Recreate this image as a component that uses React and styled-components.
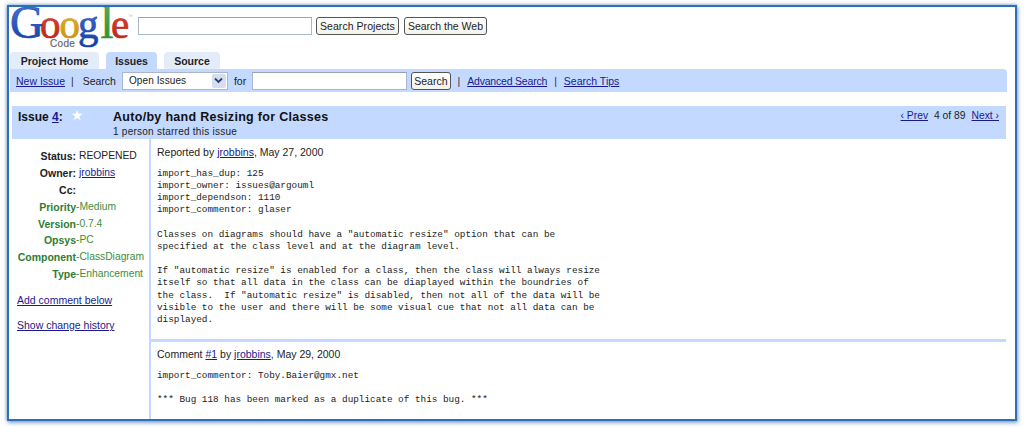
import React from 'react';
import styled, { createGlobalStyle } from 'styled-components';

const Global = createGlobalStyle`
  html, body { margin: 0; padding: 0; background: #fff; }
  body { width: 1024px; height: 427px; overflow: hidden; font-family: "Liberation Sans", Arial, sans-serif; color: #222; }
`;

const Frame = styled.div`
  box-sizing: border-box;
  width: 1010px;
  height: 416px;
  margin: 5px 0 0 7px;
  border: 2px solid #2c70b5;
  box-shadow: 1px 2px 4px rgba(70, 120, 180, 0.6), -1px 0 3px rgba(70, 120, 180, 0.35), 0 -1px 3px rgba(70, 120, 180, 0.3);
  background: #fff;
  overflow: hidden;
`;

const Masthead = styled.div`
  display: flex;
  align-items: flex-start;
  height: 45px;
  padding-left: 1px;
`;

const LogoSvg = styled.svg`
  display: block;
  width: 128px;
  height: 45px;
  flex: none;
  font-family: "Liberation Serif", serif;
  font-size: 47px;
`;

const SearchForm = styled.div`
  display: flex;
  align-items: center;
  gap: 4px;
  padding-top: 10px;
`;

const TextBox = styled.div`
  box-sizing: border-box;
  width: ${p => p.$w}px;
  height: 18px;
  margin: ${p => p.$margin || 0};
  background: #fff;
  border: 1px solid #a9b7c9;
  border-top-color: #9aa3ad;
`;

const Btn = styled.button`
  box-sizing: border-box;
  height: 18px;
  padding: 0 ${p => p.$pad || 3}px;
  margin-left: ${p => p.$ml || 0}px;
  background: linear-gradient(#fff, #f3f2ea);
  border: 1px solid #555;
  border-radius: 3px;
  font: 10.5px "Liberation Sans", sans-serif;
  letter-spacing: ${p => p.$ls || 0}px;
  color: #222;
  white-space: nowrap;
`;

const Tabs = styled.div`
  display: flex;
  gap: 7px;
  height: 17px;
  padding-left: 1px;
`;

const Tab = styled.div`
  box-sizing: border-box;
  width: ${p => p.$w}px;
  background: ${p => (p.$active ? '#c3d9ff' : '#e5ecf9')};
  border-radius: 4px 4px 0 0;
  font-size: 10.5px;
  font-weight: bold;
  line-height: 18px;
  text-align: center;
  color: #222;
`;

const SubBar = styled.div`
  display: flex;
  align-items: center;
  box-sizing: border-box;
  width: 997px;
  height: 23px;
  margin-left: 1px;
  padding-left: 6px;
  background: #c3d9ff;
  border-radius: 0 4px 0 0;
  font-size: 10.5px;
  white-space: nowrap;
`;

const A = styled.a`
  color: #1a1a8c;
  text-decoration: underline;
  letter-spacing: ${p => p.$ls || 0}px;
  cursor: pointer;
`;

const Sep = styled.span`
  margin: 0 ${p => p.$m || 6}px;
  color: #333;
`;

const SelectBox = styled.div`
  box-sizing: border-box;
  display: flex;
  align-items: center;
  justify-content: space-between;
  width: 106px;
  height: 18px;
  margin: 0 6px;
  padding: 0 1px 0 6px;
  background: #fff;
  border: 1px solid #a9b7c9;
  font-size: 10px;
  letter-spacing: 0.1px;
`;

const SelectArrow = styled.span`
  display: flex;
  align-items: center;
  justify-content: center;
  width: 14px;
  height: 14px;
  background: #d5deef;
  border-radius: 2px;
`;

const IssueHead = styled.div`
  display: flex;
  box-sizing: border-box;
  width: 994px;
  height: 33px;
  margin: 14px 0 0 3px;
  background: #c3d9ff;
`;

const IssueId = styled.div`
  display: flex;
  align-items: flex-start;
  width: 101px;
  padding: 4px 0 0 6px;
  box-sizing: border-box;
  font-size: 12px;
  font-weight: bold;
  line-height: 15px;
  white-space: pre;
  color: #111;
`;

const Star = styled.span`
  margin-left: 8px;
  margin-top: -2px;
  font-size: 14px;
  font-family: "DejaVu Sans", sans-serif;
  font-weight: normal;
  color: #fff;
`;

const TitleCol = styled.div`
  flex: 1;
  padding-top: 4px;
`;

const Title = styled.div`
  font-size: 12.5px;
  font-weight: bold;
  line-height: 15px;
  letter-spacing: 0.3px;
  color: #111;
`;

const Stars = styled.div`
  font-size: 10px;
  line-height: 13px;
  letter-spacing: 0.25px;
  color: #222;
`;

const Pager = styled.div`
  display: flex;
  gap: 6px;
  padding: 3px 7px 0 0;
  font-size: 10.3px;
  line-height: 13px;
  white-space: nowrap;
`;

const Body = styled.div`
  display: flex;
  height: 280px;
  margin-left: 3px;
  width: 994px;
`;

const Side = styled.div`
  box-sizing: border-box;
  width: 139px;
  padding: 9px 0 0 5px;
  border-right: 2px solid #c3d9ff;
  flex: none;
`;

const Meta = styled.div`
  display: grid;
  grid-template-columns: 59px auto;
  grid-auto-rows: 16.9px;
  font-size: 10.3px;
  line-height: 16px;
  white-space: nowrap;
`;

const Key = styled.span`
  text-align: right;
  font-size: 10.5px;
  font-weight: bold;
  color: ${p => (p.$green ? '#2e7d32' : '#222')};
`;

const Val = styled.span`
  color: ${p => (p.$green ? '#3a8f3e' : '#222')};
  padding-left: ${p => (p.$green ? 0 : 3)}px;
`;

const SideLink = styled.div`
  margin-top: ${p => p.$mt}px;
  font-size: 10.5px;
  line-height: 13px;
`;

const Main = styled.div`
  flex: 1;
`;

const Post = styled.div`
  box-sizing: border-box;
  height: ${p => p.$h}px;
  padding: ${p => p.$pt}px 0 0 6px;
  border-bottom: ${p => (p.$line ? '3px solid #c3d9ff' : 'none')};
`;

const Byline = styled.div`
  font-size: 10.5px;
  line-height: 13px;
  color: #222;
`;

const Pre = styled.pre`
  margin: ${p => p.$mt}px 0 0;
  font-family: "Liberation Mono", "Courier New", monospace;
  font-size: 9.35px;
  line-height: 12.15px;
  color: #222;
`;

const reported = `import_has_dup: 125
import_owner: issues@argouml
import_dependson: 1110
import_commentor: glaser

Classes on diagrams should have a "automatic resize" option that can be
specified at the class level and at the diagram level.

If "automatic resize" is enabled for a class, then the class will always resize
itself so that all data in the class can be diaplayed within the boundries of
the class.  If "automatic resize" is disabled, then not all of the data will be
visible to the user and there will be some visual cue that not all data can be
displayed.`;

const comment = `import_commentor: Toby.Baier@gmx.net

*** Bug 118 has been marked as a duplicate of this bug. ***`;

const labels = [
  ['Priority', 'Medium'],
  ['Version', '0.7.4'],
  ['Opsys', 'PC'],
  ['Component', 'ClassDiagram'],
  ['Type', 'Enhancement'],
];

const Logo = () => (
  <LogoSvg viewBox="0 0 128 45">
    <defs>
      <linearGradient id="lgBlue" x1="0" y1="0" x2="0" y2="1">
        <stop offset="0" stopColor="#4a7fe0" />
        <stop offset="1" stopColor="#123a9c" />
      </linearGradient>
      <linearGradient id="lgRed" x1="0" y1="0" x2="0" y2="1">
        <stop offset="0" stopColor="#e8543a" />
        <stop offset="1" stopColor="#b01c10" />
      </linearGradient>
      <linearGradient id="lgYellow" x1="0" y1="0" x2="0" y2="1">
        <stop offset="0" stopColor="#f0c330" />
        <stop offset="1" stopColor="#c08a0c" />
      </linearGradient>
      <linearGradient id="lgGreen" x1="0" y1="0" x2="0" y2="1">
        <stop offset="0" stopColor="#55b855" />
        <stop offset="1" stopColor="#2a8a30" />
      </linearGradient>
    </defs>
    <text x="0" y="31" fill="url(#lgBlue)" stroke="#1f4fb5" strokeWidth="0.7">G</text>
    <text x="30" y="31" fontSize="41" fill="url(#lgRed)" stroke="#c52a1a" strokeWidth="0.7">o</text>
    <text x="49.5" y="31" fontSize="41" fill="url(#lgYellow)" stroke="#cc9a10" strokeWidth="0.7">o</text>
    <text x="68" y="31" fontSize="41" fill="url(#lgBlue)" stroke="#1f4fb5" strokeWidth="0.7">g</text>
    <text x="90.5" y="31" fill="url(#lgGreen)" stroke="#2f8f35" strokeWidth="0.7">l</text>
    <text x="101" y="31" fontSize="41" fill="url(#lgRed)" stroke="#c52a1a" strokeWidth="0.7">e</text>
    <text x="118" y="11" fontSize="5" fontFamily="Liberation Sans, sans-serif" fill="#bbb">™</text>
    <text x="40" y="40" fontSize="10" fontFamily="Liberation Sans, sans-serif" letterSpacing="0.3" fill="#666" stroke="#666" strokeWidth="0.2">Code</text>
  </LogoSvg>
);

export default function App() {
  return (
    <>
      <Global />
      <Frame>
        <Masthead>
          <Logo />
          <SearchForm>
            <TextBox $w={174} />
            <Btn $ls={0.05}>Search Projects</Btn>
            <Btn $ml={1}>Search the Web</Btn>
          </SearchForm>
        </Masthead>
        <Tabs>
          <Tab $w={89}>Project Home</Tab>
          <Tab $w={51} $active>Issues</Tab>
          <Tab $w={56}>Source</Tab>
        </Tabs>
        <SubBar>
          <A>New Issue</A>
          <Sep>|</Sep>
          <span>&nbsp;Search</span>
          <SelectBox>
            Open Issues
            <SelectArrow>
              <svg width="9" height="7" viewBox="0 0 9 7">
                <path d="M1 1.5 L4.5 5 L8 1.5" fill="none" stroke="#2d3f73" strokeWidth="1.8" />
              </svg>
            </SelectArrow>
          </SelectBox>
          <span>for</span>
          <TextBox $w={155} $margin="0 4px 0 6px" />
          <Btn $pad={2}>Search</Btn>
          <Sep $m={7}>|</Sep>
          <A $ls={-0.2}>Advanced Search</A>
          <Sep $m={7}>|</Sep>
          <A>Search Tips</A>
        </SubBar>
        <IssueHead>
          <IssueId>
            Issue <A>4</A>:<Star>★</Star>
          </IssueId>
          <TitleCol>
            <Title>Auto/by hand Resizing for Classes</Title>
            <Stars>1 person starred this issue</Stars>
          </TitleCol>
          <Pager>
            <A>‹ Prev</A>
            <span>4 of 89</span>
            <A>Next ›</A>
          </Pager>
        </IssueHead>
        <Body>
          <Side>
            <Meta>
              <Key>Status:</Key>
              <Val>REOPENED</Val>
              <Key>Owner:</Key>
              <Val><A>jrobbins</A></Val>
              <Key>Cc:</Key>
              <Val />
              {labels.map(([k, v]) => (
                <React.Fragment key={k}>
                  <Key $green>{k}</Key>
                  <Val $green>-{v}</Val>
                </React.Fragment>
              ))}
            </Meta>
            <SideLink $mt={11}><A>Add comment below</A></SideLink>
            <SideLink $mt={12}><A>Show change history</A></SideLink>
          </Side>
          <Main>
            <Post $h={203} $pt={7} $line>
              <Byline>Reported by <A>jrobbins</A>, May 27, 2000</Byline>
              <Pre $mt={9}>{reported}</Pre>
            </Post>
            <Post $h={77} $pt={6}>
              <Byline>Comment <A>#1</A> by <A>jrobbins</A>, May 29, 2000</Byline>
              <Pre $mt={9}>{comment}</Pre>
            </Post>
          </Main>
        </Body>
      </Frame>
    </>
  );
}
